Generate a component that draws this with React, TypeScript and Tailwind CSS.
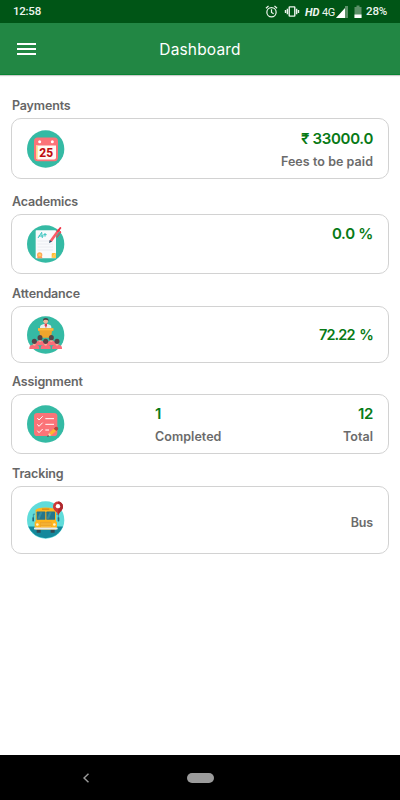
import React from 'react';

function CalendarIcon() {
  return (
    <svg viewBox="21 22.5 114 114" className="w-[38px] h-[38px] shrink-0">
      <circle cx="77" cy="79.5" r="56" fill="#35baa4" />
      <rect x="42" y="45" width="72" height="71" rx="11" fill="#fb7378" />
      <path d="M48 69h60v36a6 6 0 0 1-6 6H54a6 6 0 0 1-6-6z" fill="#fffaf4" />
      <path d="M48 69h5v42a6 6 0 0 1-5-6z" fill="#ffd98c" />
      <circle cx="59" cy="58" r="4.5" fill="#fff" />
      <circle cx="97" cy="58" r="4.5" fill="#fff" />
      <text x="78.5" y="102.5" textAnchor="middle" fontSize="36" fontWeight="800" fill="#bf0d10" className="font-['Roboto',sans-serif]">25</text>
    </svg>
  );
}

function GradeIcon() {
  return (
    <svg viewBox="21 21 114 114" className="w-[38px] h-[38px] shrink-0">
      <circle cx="77" cy="78" r="56" fill="#35baa4" />
      <rect x="47" y="37" width="61" height="84" rx="2" fill="#f9fafc" />
      <path d="M53 69h46M53 78h46M53 87h46M53 96h46" stroke="#e3e7ec" strokeWidth="2" />
      <path d="M54 60l11-17 2 17M56 54h15M75 45v11M70 50h10" stroke="#35c3bd" strokeWidth="3" fill="none" />
      <path d="M95 120v-12a3 3 0 0 1 3-3h10z" fill="#ffbd35" />
      <path d="M95 120h13v-15z" fill="#ffc94d" />
      <path d="M54 115l-3 6h17l-4-6z" fill="#fb8b5c" />
      <circle cx="59" cy="111" r="8" fill="#ffa755" />
      <circle cx="59" cy="111" r="4" fill="#ffd26b" />
      <path d="M92 70l25-35" stroke="#fb5c68" strokeWidth="8" />
      <path d="M114 39l7-9" stroke="#ee3447" strokeWidth="6" strokeLinecap="round" />
      <path d="M118 39l5 3-13 17" stroke="#ee3447" strokeWidth="3" fill="none" />
      <path d="M89 66l7 5-9 4z" fill="#34516b" />
    </svg>
  );
}

function Listener({ x, y }: { x: number; y: number }) {
  return (
    <g transform={`translate(${x} ${y})`}>
      <path d="M-15 25v-4q0-6 7-8l8-3 8 3q7 2 7 8v4z" fill="#fb6c78" />
      <path d="M-4 7h8v6q-4 4-8 0z" fill="#eeb49b" />
      <ellipse cx="0" cy="2" rx="7.5" ry="8" fill="#574448" />
    </g>
  );
}

function ClassIcon() {
  return (
    <svg viewBox="21 21 114 114" className="w-[38px] h-[38px] shrink-0">
      <circle cx="77" cy="78" r="56" fill="#35baa4" />
      <path d="M60 58V53q0-5 9-7l8-2 8 2q9 2 9 7v5z" fill="#e9edef" />
      <path d="M74 43h7v6l-3 9-4-9z" fill="#dc4252" />
      <circle cx="77" cy="37" r="7" fill="#f0b69b" />
      <path d="M69 36q-1-9 8-9t9 9q-3-4-9-4t-8 4z" fill="#4c4145" />
      <path d="M54 58h46v8h-4l-3 20H61l-3-20h-4z" fill="#eea52d" />
      <path d="M54 58h46v6H54z" fill="#ffb83e" />
      <Listener x={60} y={84} />
      <Listener x={94} y={84} />
      <Listener x={43} y={95} />
      <Listener x={77} y={95} />
      <Listener x={111} y={95} />
    </svg>
  );
}

function ChecklistIcon() {
  return (
    <svg viewBox="21 21 114 114" className="w-[38px] h-[38px] shrink-0">
      <circle cx="77" cy="78" r="56" fill="#35baa4" />
      <rect x="42" y="45" width="70" height="69" rx="10" fill="#fb7378" />
      <path d="M52 60l5 6 11-11M52 79l5 6 11-11M52 98l5 6 11-11" stroke="#fff" strokeWidth="3" fill="none" />
      <path d="M76 62h26M76 79h26M76 96h11" stroke="#fff" strokeWidth="3" />
      <path d="M87 105l17-16 8 7-18 16z" fill="#ffb52e" />
      <path d="M87 105l7 7-12 4z" fill="#f6d5ad" />
      <path d="M84 111l-3 6 7-2z" fill="#4b3b42" />
      <path d="M101 92l5-5q4-2 7 1t1 6l-5 5z" fill="#b94240" />
    </svg>
  );
}

function BusIcon() {
  return (
    <svg viewBox="21 19.5 114 114" className="w-[38px] h-[38px] shrink-0">
      <circle cx="77" cy="76.5" r="56" fill="#60dcda" />
      <path d="M25 96h104a56 56 0 0 1-104 0z" fill="#14889b" />
      <path d="M45 59h-5v14M109 59h6v14" stroke="#26748a" strokeWidth="2" fill="none" />
      <rect x="37" y="68" width="5" height="13" rx="2" fill="#24677d" />
      <rect x="113" y="68" width="5" height="13" rx="2" fill="#24677d" />
      <path d="M50 101h12v14H50zM92 101h12v14H92z" fill="#324854" />
      <path d="M47 47q2-8 30-8t31 8v58H47z" fill="#ffb51e" />
      <rect x="66" y="42" width="22" height="4" fill="#d88a17" />
      <rect x="50" y="51" width="26" height="25" rx="2" fill="#24758b" />
      <rect x="79" y="51" width="26" height="25" rx="2" fill="#24758b" />
      <path d="M52 73l8-20h7l-8 20zM80 73l8-20h7l-8 20z" fill="#368c9d" />
      <path d="M44 82q33-6 67 0v17H44z" fill="#ffb51e" />
      <rect x="61" y="82" width="33" height="17" fill="#e99a20" />
      <path d="M62 86h31M62 91h31M62 96h31" stroke="#ffcd50" strokeWidth="2" />
      <circle cx="52" cy="90" r="4" fill="#fff4ce" />
      <circle cx="103" cy="90" r="4" fill="#fff4ce" />
      <rect x="42" y="99" width="71" height="6" rx="2" fill="#e7edf0" />
      <path d="M115 62C112 52 99 48 99 36a15 15 0 0 1 30 0c0 12-11 16-14 26z" fill="#cf3936" />
      <path d="M114 21a15 15 0 0 1 15 15c0 12-11 16-14 26z" fill="#ae292f" />
      <circle cx="114" cy="35" r="6.5" fill="#fff" />
    </svg>
  );
}

function StatusBar() {
  return (
    <div className="h-[23px] bg-[#005516] flex items-center text-[#edf5ee] font-['Roboto',sans-serif] font-medium text-[11.5px] leading-none pt-px pl-[13px] pr-[13px]">
      <span className="tracking-[-0.25px]">12:58</span>
      <div className="ml-auto flex items-center">
        <svg viewBox="0 0 14 14" className="w-[13px] h-[13px] mr-[6px] mb-px" fill="none" stroke="currentColor" strokeWidth="1.3">
          <circle cx="7" cy="7.8" r="5" />
          <path d="M7 4.500V8l2.300 1.500M1 3.500L3.800 1M13 3.500L10.200 1" />
        </svg>
        <svg viewBox="0 0 16 14" className="w-[16px] h-[13px] mr-[5px] mb-px" fill="none" stroke="currentColor" strokeWidth="1.5">
          <rect x="5" y="2" width="6" height="10" rx=".5" />
          <path d="M3 4v6M1 5.500v3M13 4v6M15 5.500v3" />
        </svg>
        <span className="italic font-bold text-[11px] w-[17px]">HD</span>
        <span className="text-[11px] w-[14px] tracking-[-0.4px] font-normal">4G</span>
        <svg viewBox="0 0 12 12" className="w-[12px] h-[12px] mr-[6px] mb-px">
          <path d="M0 12L9 3V0h3v12z" fill="#5c9068" />
          <path d="M0 12L9 2v10z" fill="#fff" />
        </svg>
        <svg viewBox="0 0 8 13" className="w-[8px] h-[13px] mr-[4px] mb-px">
          <path d="M.5 2h2V.5h3V2h2v11h-7z" fill="#5c9068" />
          <path d="M.5 9.500h7V13h-7z" fill="#fff" />
        </svg>
        <span className="tracking-[-0.2px]">28%</span>
      </div>
    </div>
  );
}

function Section({ title, icon, card, children }: { title: string; icon: React.ReactNode; card: string; children: React.ReactNode }) {
  return (
    <section>
      <h2 className="h-[20px] leading-[22px] mb-[3px] pl-px text-[12.5px] tracking-[-0.15px] font-semibold text-[#666]">{title}</h2>
      <div className={`flex items-center border border-[#d2d2d2] rounded-[10px] pl-[15px] pr-[15px] ${card}`}>
        {icon}
        {children}
      </div>
    </section>
  );
}

function Stat({ value, label }: { value: string; label?: string }) {
  return (
    <div className="flex flex-col pt-[2px]">
      <span className="h-[23px] leading-[24px] text-[15px] tracking-[-0.3px] font-semibold text-[#087a16]">{value}</span>
      <span className="h-[23px] leading-[24px] text-[12.5px] tracking-[0.05px] font-semibold text-[#6b6b6b]">{label}</span>
    </div>
  );
}

export default function App() {
  return (
    <div className="w-full h-[800px] bg-white flex flex-col font-['Inter',sans-serif]">
      <StatusBar />

      {/* Title bar */}
      <header className="h-[52px] bg-[#228744] flex items-center px-[17px] border-b border-[#098333] shadow-[0_1px_1px_rgba(0,0,0,0.2)]">
        <div className="w-[19px] flex flex-col gap-[3px]">
          <span className="h-[2px] bg-white" />
          <span className="h-[2px] bg-white" />
          <span className="h-[2px] bg-white" />
        </div>
        <h1 className="flex-1 text-center pr-[19px] pt-[2px] text-[15.5px] tracking-[0.15px] text-white">Dashboard</h1>
      </header>

      <main className="flex-1 flex flex-col pt-[20px] pl-[11px] pr-[11px]">
        <Section title="Payments" icon={<CalendarIcon />} card="h-[61px] mb-[12px]">
          <div className="ml-auto text-right">
            <Stat value="₹ 33000.0" label="Fees to be paid" />
          </div>
        </Section>
        <Section title="Academics" icon={<GradeIcon />} card="h-[60px] mb-[9px]">
          <div className="ml-auto text-right">
            <Stat value="0.0 %" />
          </div>
        </Section>
        <Section title="Attendance" icon={<ClassIcon />} card="h-[57px] mb-[8px]">
          <span className="ml-auto pt-px text-[14.5px] tracking-[-0.9px] [word-spacing:2px] font-semibold text-[#087a16]">72.22 %</span>
        </Section>
        <Section title="Assignment" icon={<ChecklistIcon />} card="h-[60px] mb-[9px]">
          <div className="ml-[90px]">
            <Stat value="1" label="Completed" />
          </div>
          <div className="ml-auto text-right">
            <Stat value="12" label="Total" />
          </div>
        </Section>
        <Section title="Tracking" icon={<BusIcon />} card="h-[68px]">
          <span className="ml-auto pt-[6px] text-[12.5px] tracking-[-0.2px] font-semibold text-[#6b6b6b]">Bus</span>
        </Section>
      </main>

      {/* System navigation */}
      <nav className="h-[45px] bg-black flex items-center pl-[83px]">
        <svg viewBox="0 0 6 10" className="w-[6px] h-[10px]" fill="none" stroke="#999" strokeWidth="1.5">
          <path d="M5.500 .8L1 5l4.500 4.200" />
        </svg>
        <span className="ml-[98px] w-[27px] h-[10px] rounded-full bg-[#9b9b9b]" />
      </nav>
    </div>
  );
}
